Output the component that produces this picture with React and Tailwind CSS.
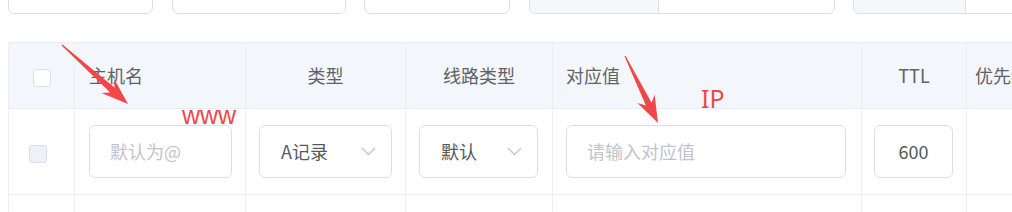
import React from "react";

const font = { fontFamily: '"Noto Sans CJK SC", "Liberation Sans", sans-serif' };

const Chevron = () => (
  <svg width="15" height="9" viewBox="0 0 15 9" className="shrink-0">
    <polyline points="1,1 7.5,7.5 14,1" fill="none" stroke="#c0c4cc" strokeWidth="1.3" />
  </svg>
);

// red annotation arrow, drawn from tail to tip
const Arrow = ({ x1, y1, x2, y2 }) => {
  const dx = x2 - x1;
  const dy = y2 - y1;
  const len = Math.hypot(dx, dy);
  const ux = dx / len;
  const uy = dy / len;
  const nx = -uy;
  const ny = ux;
  const h = 27;
  const bx = x2 - ux * h;
  const by = y2 - uy * h;
  const nbx = x2 - ux * (h - 6);
  const nby = y2 - uy * (h - 6);
  const p = (x, y) => `${x.toFixed(1)},${y.toFixed(1)}`;
  const pts = [
    p(x1 + nx * 0.6, y1 + ny * 0.6),
    p(nbx + nx * 3.2, nby + ny * 3.2),
    p(bx + nx * 9.5, by + ny * 9.5),
    p(x2, y2),
    p(bx - nx * 9.5, by - ny * 9.5),
    p(nbx - nx * 3.2, nby - ny * 3.2),
    p(x1 - nx * 0.6, y1 - ny * 0.6),
  ].join(" ");
  return <polygon points={pts} fill="#f2474a" />;
};

const Cell = ({ children, className = "" }) => (
  <div className={`border-r border-[#ebeef5] flex items-center ${className}`}>{children}</div>
);

export default function App() {
  return (
    <div className="relative w-[1012px] h-[212px] overflow-hidden bg-white" style={font}>
      {/* filter bar, cut off at the top */}
      <div className="flex mt-[-18px] pl-[8px] h-[32px]">
        <div className="w-[145px] shrink-0 border border-[#dcdfe6] rounded-[6px]" />
        <div className="w-[174px] shrink-0 ml-[19px] border border-[#dcdfe6] rounded-[6px]" />
        <div className="w-[146px] shrink-0 ml-[18px] border border-[#dcdfe6] rounded-[6px]" />
        <div className="w-[306px] shrink-0 ml-[19px] border border-[#dcdfe6] rounded-[6px] flex overflow-hidden">
          <div className="w-[129px] bg-[#f5f7fa] border-r border-[#dcdfe6]" />
        </div>
        <div className="w-[180px] shrink-0 ml-[18px] border border-[#dcdfe6] rounded-[6px] flex overflow-hidden">
          <div className="w-[112px] bg-[#f5f7fa] border-r border-[#dcdfe6]" />
        </div>
      </div>

      {/* table */}
      <div className="ml-[8px] mt-[28px] w-[1100px] border-l border-t border-[#ebeef5]">
        <div className="grid grid-cols-[66px_171px_160px_147px_309px_105px_142px] h-[66px] bg-[#f3f6fa] border-b border-[#ebeef5] text-[18px] text-[#5f6268]">
          <Cell className="justify-center">
            <span className="w-[18px] h-[18px] mt-[4px] bg-white border border-[#dcdfe6] rounded-[3px]" />
          </Cell>
          <Cell className="pl-[14px]">主机名</Cell>
          <Cell className="justify-center">类型</Cell>
          <Cell className="justify-center">线路类型</Cell>
          <Cell className="pl-[13px]">对应值</Cell>
          <Cell className="justify-center">TTL</Cell>
          <Cell className="pl-[8px]">优先级</Cell>
        </div>
        <div className="grid grid-cols-[66px_171px_160px_147px_309px_105px_142px] h-[86px] border-b border-[#ebeef5] text-[18px]">
          <Cell className="pl-[20px]">
            <span className="w-[18px] h-[18px] mt-[4px] bg-[#edf1fa] border border-[#dcdfe6] rounded-[3px]" />
          </Cell>
          <Cell className="pl-[14px]">
            <div className="w-[143px] h-[53px] border border-[#dcdfe6] rounded-[6px] flex items-center pl-[20px] text-[#c0c4cc]">
              默认为@
            </div>
          </Cell>
          <Cell className="pl-[13px]">
            <div className="w-[133px] h-[53px] border border-[#dcdfe6] rounded-[6px] flex items-center justify-between pl-[21px] pr-[15px] text-[#55585e]">
              <span>A记录</span>
              <Chevron />
            </div>
          </Cell>
          <Cell className="pl-[13px]">
            <div className="w-[119px] h-[53px] border border-[#dcdfe6] rounded-[6px] flex items-center justify-between pl-[21px] pr-[15px] text-[#55585e]">
              <span>默认</span>
              <Chevron />
            </div>
          </Cell>
          <Cell className="pl-[13px]">
            <div className="w-[280px] h-[53px] border border-[#dcdfe6] rounded-[6px] flex items-center pl-[20px] text-[#c0c4cc]">
              请输入对应值
            </div>
          </Cell>
          <Cell className="pl-[12px]">
            <div className="w-[79px] h-[53px] border border-[#dcdfe6] rounded-[6px] flex items-center justify-center text-[#55585e]">
              600
            </div>
          </Cell>
          <Cell />
        </div>
        <div className="grid grid-cols-[66px_171px_160px_147px_309px_105px_142px] h-[40px]">
          <Cell />
          <Cell />
          <Cell />
          <Cell />
          <Cell />
          <Cell />
          <Cell />
        </div>
      </div>

      {/* annotations */}
      <span
        className="absolute left-[182px] top-[103px] text-[25px] leading-none text-[#f2474a]"
        style={{ fontFamily: '"Liberation Sans", sans-serif' }}
      >
        www
      </span>
      <span
        className="absolute left-[701px] top-[86px] text-[25px] leading-none text-[#f2474a]"
        style={{ fontFamily: '"Noto Sans", sans-serif' }}
      >
        IP
      </span>
      <svg className="absolute left-0 top-0" width="1012" height="212">
        <Arrow x1={62} y1={45} x2={128} y2={104} />
        <Arrow x1={625} y1={56} x2={658} y2={123} />
      </svg>
    </div>
  );
}
